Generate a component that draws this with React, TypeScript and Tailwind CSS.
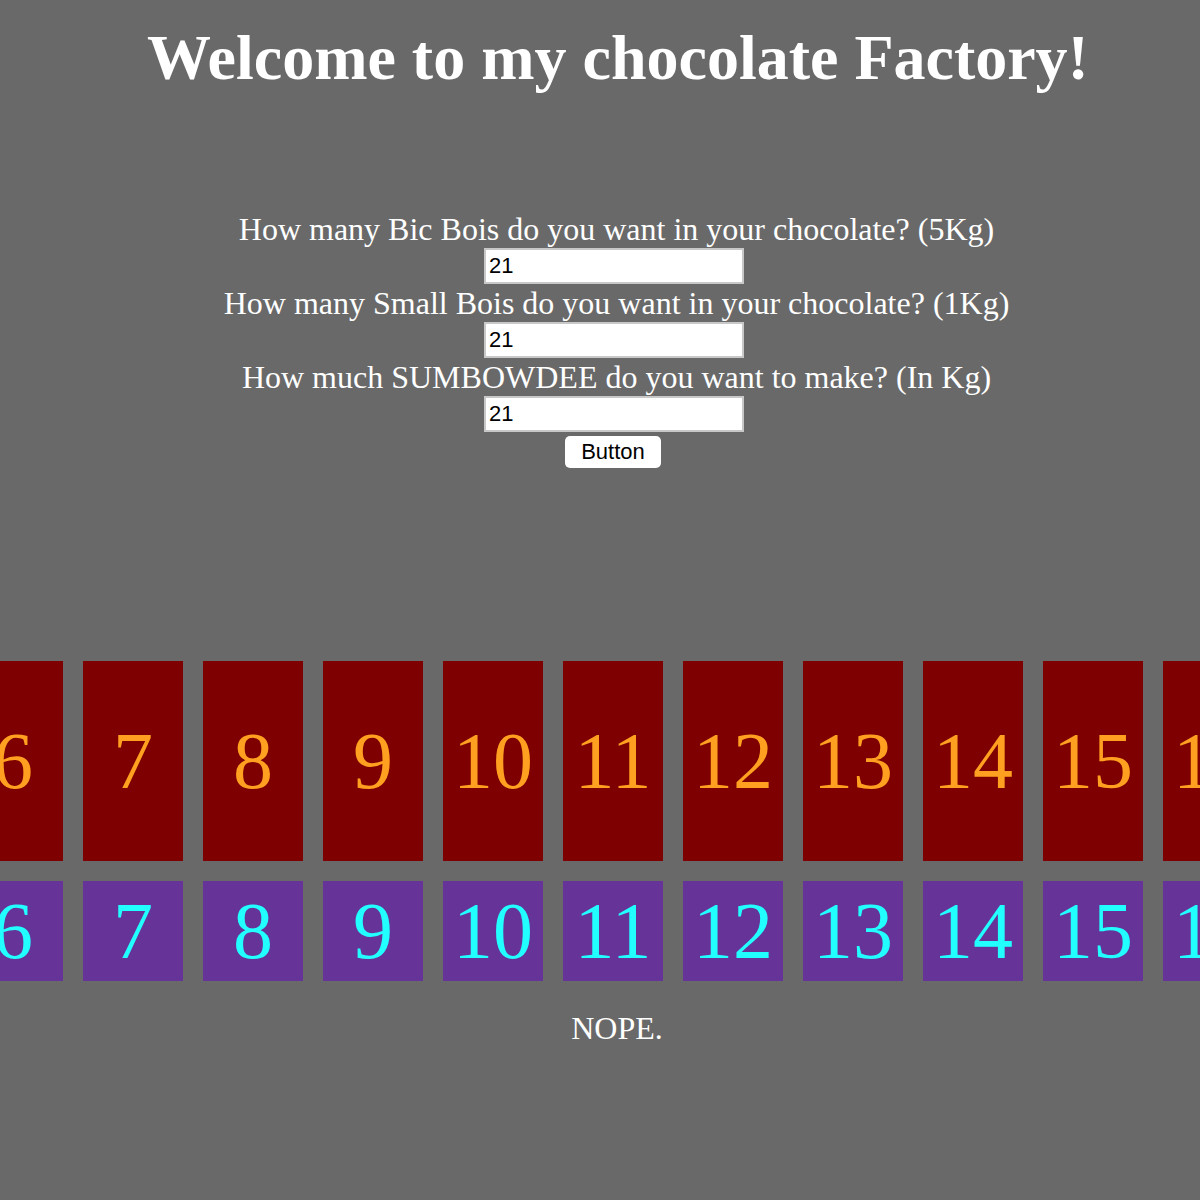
import { useState } from 'react';

const serif = "font-['Liberation_Serif','Times_New_Roman',serif]";
const sans = "font-['Liberation_Sans',Arial,sans-serif]";

const questions = [
  'How many Bic Bois do you want in your chocolate? (5Kg)',
  'How many Small Bois do you want in your chocolate? (1Kg)',
  'How much SUMBOWDEE do you want to make? (In Kg)',
];

export default function App() {
  const [vals, setVals] = useState(['21', '21', '21']);
  const count = Number(vals[2]) || 0;
  const nums = Array.from({ length: count }, (_, i) => i + 1);

  return (
    <div className="min-h-[1200px] w-full overflow-hidden bg-[#696969]">
      <div className={`w-[1226px] flex flex-col items-center text-white ${serif}`}>
        <h1 className="mt-[22px] pl-[10px] text-[64px] font-bold leading-[72px]">
          Welcome to my chocolate Factory!
        </h1>

        <div className="mt-[116px] flex flex-col items-center">
          {questions.map((q, i) => (
            <div key={q} className="flex flex-col items-center">
              <label className="pl-[7px] text-[32px] leading-[38px]">{q}</label>
              <input
                className={`ml-[2px] h-[36px] w-[260px] border-2 border-[#c8c8c8] bg-white px-[3px] text-[22px] text-black ${sans}`}
                value={vals[i]}
                onChange={e => {
                  const next = [...vals];
                  next[i] = e.target.value;
                  setVals(next);
                }}
              />
            </div>
          ))}
          <button
            className={`mt-[4px] h-[32px] w-[96px] rounded-[5px] bg-white text-[22px] leading-[32px] text-black ${sans}`}
          >
            Button
          </button>
        </div>

        <div className="mt-[193px] flex w-full justify-center gap-[20px]">
          {nums.map(n => (
            <div
              key={n}
              className="flex h-[200px] w-[100px] shrink-0 items-center justify-center bg-[#7f0000] text-[80px] text-[#ffa020]"
            >
              {n}
            </div>
          ))}
        </div>

        <div className="mt-[20px] flex w-full justify-center gap-[20px]">
          {nums.map(n => (
            <div
              key={n}
              className="flex h-[100px] w-[100px] shrink-0 items-center justify-center bg-[#663399] text-[80px] text-[#22ffff]"
            >
              {n}
            </div>
          ))}
        </div>

        <p className="mt-[29px] pl-[8px] text-[32px] leading-[36px]">NOPE.</p>
      </div>
    </div>
  );
}
